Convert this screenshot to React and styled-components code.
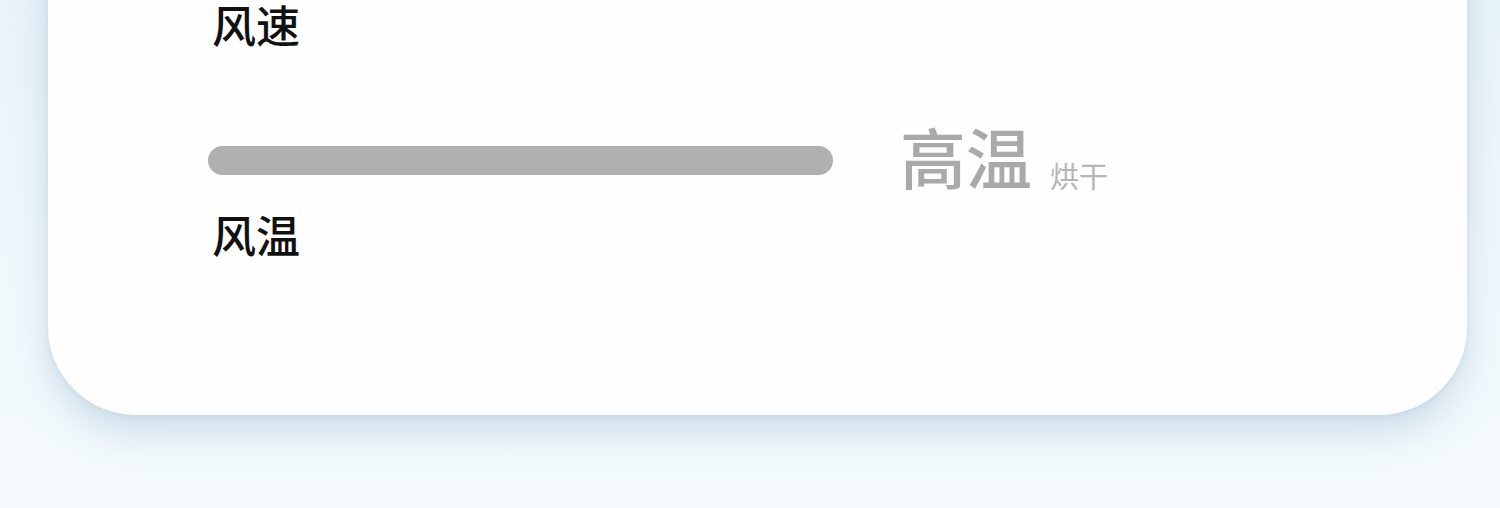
import React from 'react';
import styled, { createGlobalStyle } from 'styled-components';

const GlobalStyle = createGlobalStyle`
  html, body {
    margin: 0;
    padding: 0;
  }
  body {
    font-family: "Noto Sans CJK SC", "Noto Sans", sans-serif;
  }
`

const Page = styled.div`
  width: 1500px;
  height: 508px;
  overflow: hidden;
  box-sizing: border-box;
  padding: 0 33px 0 48px;
  background: linear-gradient(180deg, #e9f3f9 0%, #f1f8fc 60%, #f4fafd 100%);
`

const Card = styled.div`
  margin-top: -100px;
  height: 515px;
  box-sizing: border-box;
  padding: 100px 0 0 164px;
  background: #fefefe;
  border-radius: 88px;
  box-shadow: 0 18px 36px rgba(160, 190, 210, 0.45), 0 2px 6px rgba(170, 195, 210, 0.3);
  display: flex;
  flex-direction: column;
`

const Label = styled.div`
  font-size: 44px;
  font-weight: 500;
  line-height: 50px;
  color: #111;
  margin-top: ${p => p.$top || 0}px;
`

const SliderRow = styled.div`
  display: flex;
  align-items: center;
  gap: 67px;
  margin-top: ${p => p.$top || 0}px;
  margin-left: -4px;
`

const Track = styled.div`
  width: 625px;
  height: 29px;
  border-radius: 15px;
  background: #b0b0b0;
`

const Value = styled.div`
  display: flex;
  align-items: flex-end;
  gap: 18px;
  margin: -5px 0 5px;
`

const Big = styled.span`
  font-size: 66px;
  font-weight: 500;
  color: #a9a9a9;
  line-height: 1;
`

const Small = styled.span`
  font-size: 29px;
  color: #b6b6b6;
  line-height: 1;
  margin-bottom: -2px;
`

export default function App() {
  return (
    <>
      <GlobalStyle />
      <Page>
        <Card>
          <Label $top={-1}>风速</Label>
          <SliderRow $top={78}>
            <Track />
            <Value>
              <Big>高温</Big>
              <Small>烘干</Small>
            </Value>
          </SliderRow>
          <Label $top={16}>风温</Label>
        </Card>
      </Page>
    </>
  );
}
